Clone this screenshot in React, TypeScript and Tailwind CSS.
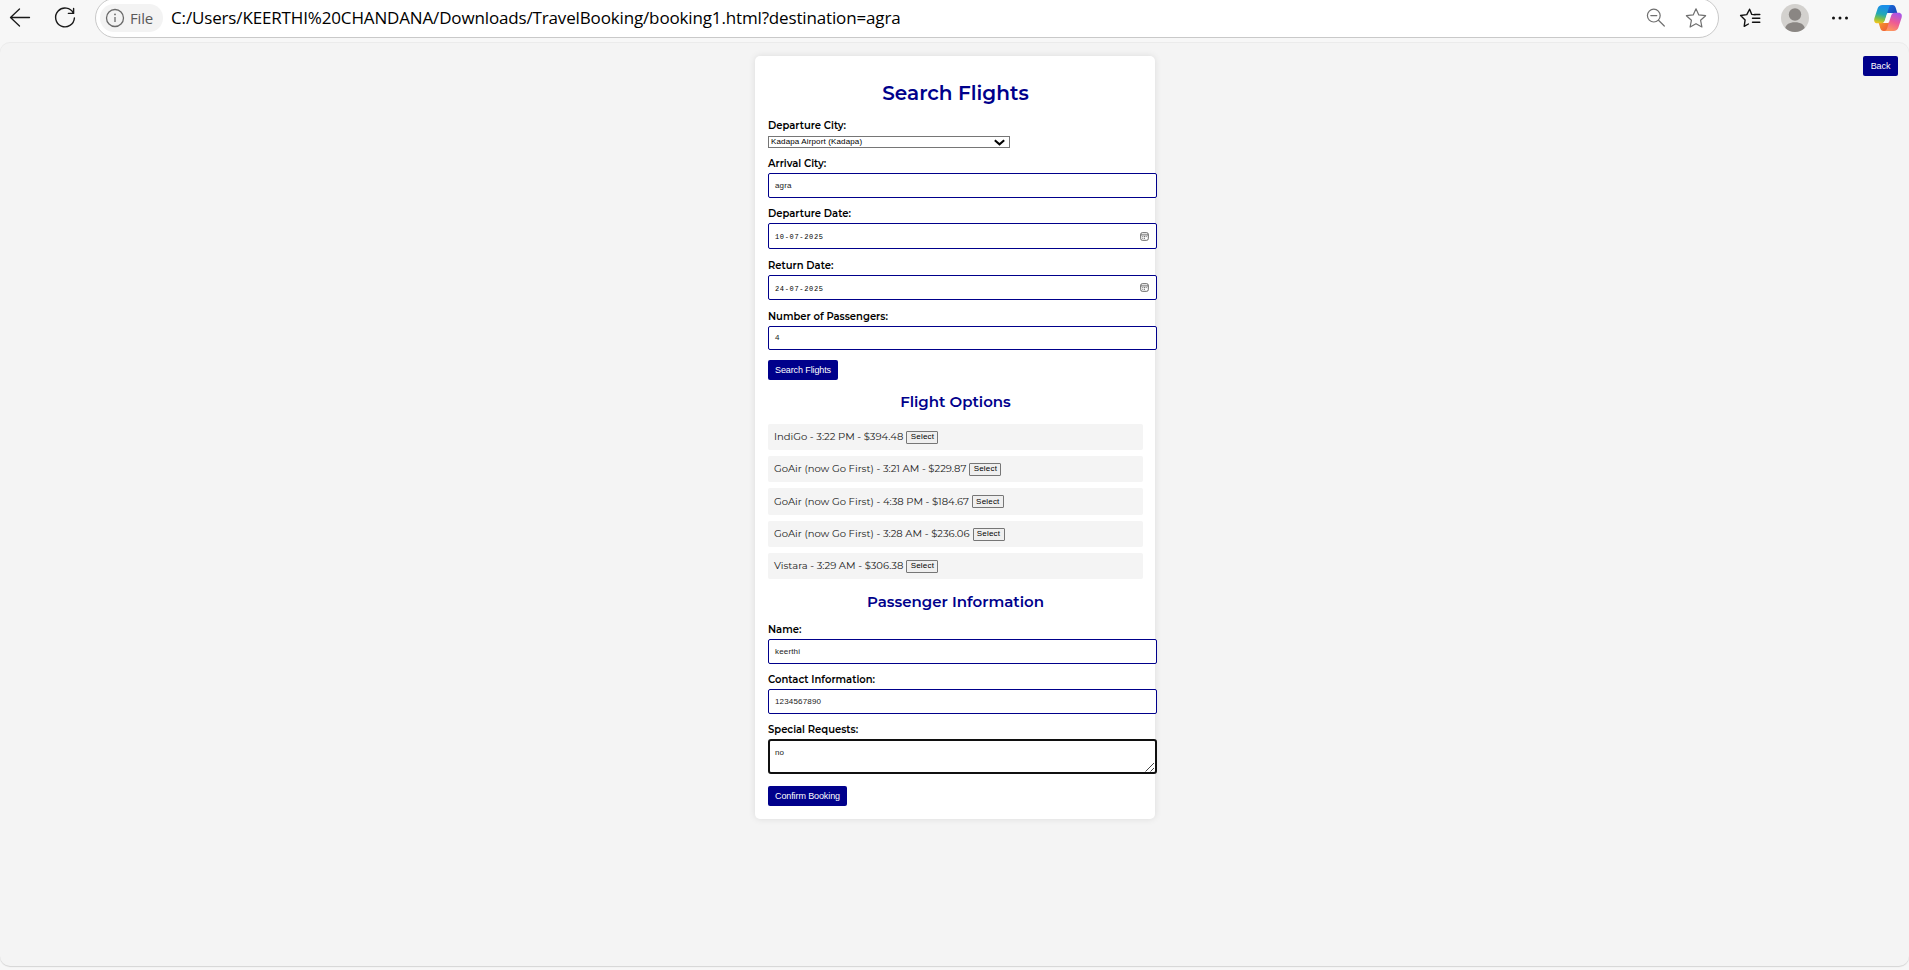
import type { ReactNode } from "react";

const sans = "font-['Liberation_Sans',Arial,sans-serif]";

function Toolbar() {
  return (
    <header className="flex h-[42px] shrink-0 items-start">
      <svg className="mt-[6px] ml-2 size-6 shrink-0" viewBox="0 0 24 24" fill="none" stroke="#1a1a1a" strokeWidth="1.3" strokeLinecap="round" strokeLinejoin="round">
        <path d="M21.5 11.5H2.5M11.5 3L2.5 11.5L11.5 20" />
      </svg>
      <svg className="mt-[6px] ml-[21px] size-6 shrink-0" viewBox="0 0 24 24" fill="none" stroke="#1a1a1a" strokeWidth="1.4" strokeLinecap="round" strokeLinejoin="round">
        <path d="M20.4 7.2A9.4 9.4 0 1 0 21.4 12M20.6 2.5V7.4H15.4" />
      </svg>
      <div className="-mt-[2px] ml-[18px] flex h-10 w-[1624px] shrink-0 items-center rounded-full border border-[#c9c9c9] bg-white pr-[10px] pl-1">
        <div className="flex h-7 w-[63px] shrink-0 items-center rounded-full bg-[#f3f3f3] pl-[5px]">
          <svg className="size-5 shrink-0" viewBox="0 0 20 20" fill="none" stroke="#6a6a6a" strokeWidth="1.3">
            <circle cx="10" cy="10" r="8.5" />
            <path d="M10 9v5" />
            <circle cx="10" cy="6.4" r="0.9" fill="#6a6a6a" stroke="none" />
          </svg>
          <span className="ml-[5px] font-['Open_Sans',sans-serif] text-[15px] leading-5 tracking-[-0.2px] text-[#5a5a5a]">File</span>
        </div>
        <span className="ml-2 font-['Open_Sans',sans-serif] text-[17px] leading-6 tracking-[-0.148px] whitespace-nowrap text-black">
          C:/Users/KEERTHI%20CHANDANA/Downloads/TravelBooking/booking1.html?destination=agra
        </span>
        <svg className="ml-auto size-6 shrink-0" viewBox="0 0 24 24" fill="none" stroke="#707070" strokeWidth="1.2" strokeLinecap="round">
          <circle cx="9.8" cy="9.6" r="6.4" />
          <path d="M14.5 14.3L20.3 20M6.8 9.6h6" />
        </svg>
        <svg className="ml-4 size-6 shrink-0" viewBox="0 0 24 24" fill="none" stroke="#707070" strokeWidth="1.2" strokeLinejoin="round">
          <path d="M12 2.8l2.8 6.1 6.8.8-5 4.6 1.3 6.7-5.9-3.3L6.1 21l1.3-6.7-5-4.6 6.8-.8z" />
        </svg>
      </div>
      <svg className="mt-[6px] ml-[19px] size-6 shrink-0" viewBox="0 0 24 24" fill="none" stroke="#111" strokeWidth="1.4" strokeLinecap="round" strokeLinejoin="round">
        <path d="M17 8.8L13.8 8.4 11.6 3.2 8.8 8.6 2.6 9.5l4.5 4.4L6.2 20.3l4.2-2.300M14.5 12.3h7.300M14.5 16.3h7.300M16.5 8.5h5.3" />
      </svg>
      <svg className="mt-1 ml-[19px] size-7 shrink-0" viewBox="0 0 28 28">
        <circle cx="14" cy="14" r="14" fill="#d3d1ce" />
        <circle cx="14" cy="10.5" r="6.2" fill="#8a8683" />
        <path d="M4.3 24.1C4.8 20.4 8.4 18.2 14 18.2s9.2 2.2 9.7 5.9A14 14 0 0 1 14 28a14 14 0 0 1-9.7-3.9z" fill="#8a8683" />
      </svg>
      <svg className="mt-[6px] ml-[19px] size-6 shrink-0" viewBox="0 0 24 24" fill="#111">
        <circle cx="5.5" cy="12" r="1.5" />
        <circle cx="12" cy="12" r="1.5" />
        <circle cx="18.5" cy="12" r="1.5" />
      </svg>
      <CopilotLogo />
    </header>
  );
}

function CopilotLogo() {
  return (
    <svg className="mt-[3px] ml-[21px] size-[30px] shrink-0" viewBox="0 0 30 30">
      <defs>
        <linearGradient id="cpLeft" x1="0.5" y1="0" x2="0.3" y2="1">
          <stop offset="0.1" stopColor="#1a8fe8" />
          <stop offset="0.5" stopColor="#22a9b5" />
          <stop offset="0.75" stopColor="#7cc04a" />
          <stop offset="1" stopColor="#f2c61c" />
        </linearGradient>
        <linearGradient id="cpRight" x1="0.7" y1="0" x2="0.3" y2="1">
          <stop offset="0" stopColor="#a855e8" />
          <stop offset="0.5" stopColor="#ee5a94" />
          <stop offset="1" stopColor="#ff9a5a" />
        </linearGradient>
        <linearGradient id="cpTop" x1="0" y1="0" x2="1" y2="1">
          <stop offset="0" stopColor="#1a6fe0" />
          <stop offset="1" stopColor="#173fae" />
        </linearGradient>
        <linearGradient id="cpBottom" x1="0" y1="0" x2="1" y2="1">
          <stop offset="0" stopColor="#f5a524" />
          <stop offset="1" stopColor="#ee4f3e" />
        </linearGradient>
      </defs>
      <path d="M14 2h5.5c1.800 0 2.700 1.200 3.200 2.800l1.600 5.200h-4.500c-2 0-3 1-3.700 2.800L13 8z" fill="url(#cpTop)" />
      <path d="M16 28h-5.500c-1.800 0-2.700-1.200-3.200-2.800L5.700 20h4.500c2 0 3-1 3.700-2.800L17 22z" fill="url(#cpBottom)" />
      <path d="M9.5 2H19c-1.8 0-2.6 1.2-3.2 3l-4 12.500c-.6 1.700-1.600 2.800-3.400 2.800H4.500C1.500 20.300.6 18 1.500 15L4.600 5.500C5.300 3.300 7 2 9.5 2z" fill="url(#cpLeft)" />
      <path d="M20.5 28H11c1.800 0 2.600-1.200 3.200-3l4-12.500c.6-1.700 1.600-2.800 3.400-2.800h3.900c3 0 3.900 2.300 3 5.300l-3.100 9.500c-.7 2.200-2.400 3.500-4.900 3.500z" fill="url(#cpRight)" />
      <path d="M14.4 10h4.800c-1 .6-1.500 1.500-1.900 2.700L15 20h-4.800c1-.6 1.500-1.500 1.900-2.700z" fill="#fbfbfb" />
    </svg>
  );
}

function Label({ className, children }: { className: string; children: ReactNode }) {
  return (
    <label className={`block h-4 font-['Montserrat',Inter,sans-serif] text-[10px] leading-4 font-semibold whitespace-nowrap text-black ${className}`}>
      {children}
    </label>
  );
}

function Box({ className, children }: { className: string; children: ReactNode }) {
  return (
    <div className={`flex w-[389px] items-center rounded-[2px] border border-[#00008b] bg-white pl-[6px] text-[8px] leading-[10px] text-[#222] ${sans} ${className}`}>
      {children}
    </div>
  );
}

function DateValue({ children }: { children: ReactNode }) {
  return (
    <>
      <span className="mt-[2px] font-['Liberation_Mono',monospace] text-[7px] tracking-[0.66px] text-black">{children}</span>
      <svg className="mr-[7px] ml-auto size-[9px]" viewBox="0 0 9 9" fill="none" stroke="#555" strokeWidth="0.9">
        <rect x="0.7" y="0.7" width="7.6" height="7.6" rx="1.6" />
        <path d="M0.7 2.9h7.6" />
        <path d="M2.3 4.6h4.4M2.3 6.3h3" strokeDasharray="1 0.7" />
      </svg>
    </>
  );
}

function PrimaryButton({ className, children }: { className: string; children: ReactNode }) {
  return (
    <button className={`flex h-5 items-center justify-center rounded-[2px] bg-[#00008b] text-[9px] leading-3 tracking-[-0.11px] whitespace-nowrap text-white ${sans} ${className}`}>
      {children}
    </button>
  );
}

function SectionTitle({ className, children }: { className: string; children: ReactNode }) {
  return (
    <h2 className={`h-5 w-[375px] text-center font-['Montserrat',Inter,sans-serif] text-[15px] leading-5 font-semibold text-[#00008b] ${className}`}>
      {children}
    </h2>
  );
}

const flights = [
  { text: "IndiGo - 3:22 PM - $394.48", row: "h-[26px]" },
  { text: "GoAir (now Go First) - 3:21 AM - $229.87", row: "h-[26px]" },
  { text: "GoAir (now Go First) - 4:38 PM - $184.67", row: "h-[27px]" },
  { text: "GoAir (now Go First) - 3:28 AM - $236.06", row: "h-[26px]" },
  { text: "Vistara - 3:29 AM - $306.38", row: "h-[26px]" },
];

export default function App() {
  return (
    <div className="flex h-[970px] w-[1909px] flex-col overflow-hidden bg-[#f7f7f7]">
      <Toolbar />
      <main className="grid h-[924px] grid-cols-[755px_400px_1fr] items-start rounded-[10px] bg-[#f4f4f4] pt-[14px] shadow-[inset_0_1px_0_#ebebeb,0_1px_1px_#d4d4d4]">
        <form className="col-start-2 h-[763px] rounded-[5px] bg-white pt-[25px] pl-[13px] shadow-[0_0_7px_rgba(0,0,0,0.1)]">
          <h1 className="h-6 w-[375px] text-center font-['Montserrat',Inter,sans-serif] text-[20px] leading-6 font-semibold text-[#00008b]">
            Search Flights
          </h1>

          <Label className="mt-[13px]">Departure City:</Label>
          <div className={`mt-[2px] flex h-3 w-[242px] items-center border border-[#767676] bg-white pl-[2px] text-[8px] leading-[10px] tracking-[0.136px] text-black ${sans}`}>
            Kadapa Airport (Kadapa)
            <svg className="mr-[4px] ml-auto h-[7px] w-[11px]" viewBox="0 0 11 7" fill="none" stroke="#000" strokeWidth="2">
              <path d="M0.8 1.2L5.5 5.3L10.2 1.2" />
            </svg>
          </div>

          <Label className="mt-2">Arrival City:</Label>
          <Box className="mt-px h-[25px] pt-px tracking-[0.163px]">agra</Box>

          <Label className="mt-2">Departure Date:</Label>
          <Box className="mt-px h-[26px]">
            <DateValue>10-07-2025</DateValue>
          </Box>

          <Label className="mt-[9px]">Return Date:</Label>
          <Box className="mt-px h-[25px]">
            <DateValue>24-07-2025</DateValue>
          </Box>

          <Label className="mt-[9px]">Number of Passengers:</Label>
          <Box className="mt-px h-6">4</Box>

          <PrimaryButton className="mt-[10px] w-[70px]">Search Flights</PrimaryButton>

          <SectionTitle className="mt-3">Flight Options</SectionTitle>
          <ul className="mt-3 flex w-[375px] flex-col gap-[6px]">
            {flights.map((f) => (
              <li key={f.text} className={`flex items-center gap-[3px] rounded-[2px] bg-[#f4f4f4] pl-[6px] ${f.row}`}>
                <span className="font-['Montserrat',Inter,sans-serif] text-[10px] leading-4 whitespace-nowrap text-[#222]">{f.text}</span>
                <button type="button" className={`flex h-[13px] w-8 items-center justify-center rounded-[1px] border border-[#767676] bg-[#efefef] text-[8px] leading-[10px] tracking-[0.2px] text-black ${sans}`}>
                  Select
                </button>
              </li>
            ))}
          </ul>

          <SectionTitle className="mt-[13px]">Passenger Information</SectionTitle>

          <Label className="mt-[10px]">Name:</Label>
          <Box className="mt-px h-[25px] pt-px tracking-[0.165px]">keerthi</Box>

          <Label className="mt-2">Contact Information:</Label>
          <Box className="mt-px h-[25px] pt-px tracking-[0.168px]">1234567890</Box>

          <Label className="mt-2">Special Requests:</Label>
          <div className={`mt-px flex h-[35px] w-[389px] justify-between rounded-[3px] border-2 border-[#101010] bg-white pt-[7px] pl-[5px] text-[8px] leading-[10px] tracking-[0.16px] text-[#222] ${sans}`}>
            no
            <svg className="size-[10px] self-end" viewBox="0 0 10 10" fill="none" stroke="#444" strokeWidth="1">
              <path d="M0.5 9.5L9 1M5.5 9.5L9 6" />
            </svg>
          </div>

          <PrimaryButton className="mt-3 w-[79px]">Confirm Booking</PrimaryButton>
        </form>
        <PrimaryButton className="mr-[11px] w-[35px] justify-self-end">Back</PrimaryButton>
      </main>
    </div>
  );
}
